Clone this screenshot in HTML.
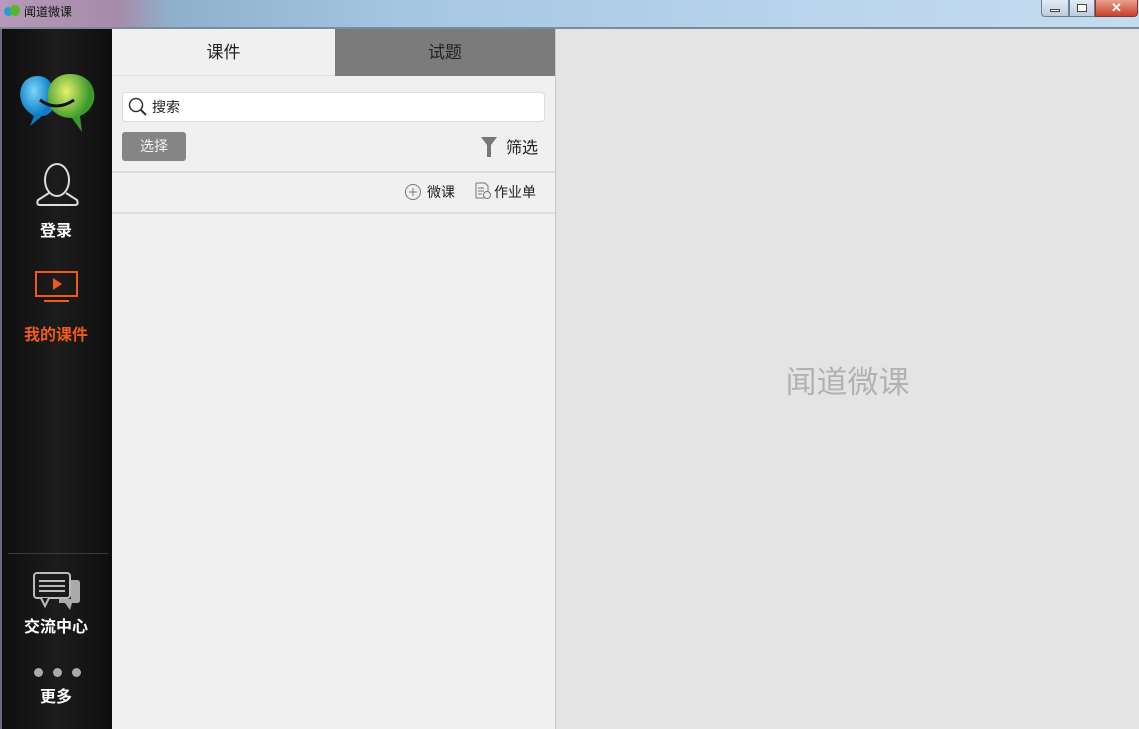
<!DOCTYPE html><html><head><meta charset="utf-8"><style>
*{margin:0;padding:0;box-sizing:border-box}
body{width:1139px;height:729px;overflow:hidden;position:relative;font-family:"Liberation Sans","Noto Sans CJK SC",sans-serif;background:#e4e4e4}
.a{position:absolute}
</style></head><body>
<div class="a" style="left:0;top:0;width:1139px;height:28px;background:linear-gradient(90deg,#b69ab8 0,#a58ca9 120px,#8fb0cc 170px,#a5c6e2 400px,#b9d4ec 800px,#c5dcef 1139px)"></div>
<div class="a" style="left:4px;top:7px;width:9px;height:9px;border-radius:50%;background:#2a9ad8"></div>
<div class="a" style="left:10px;top:5px;width:10px;height:11px;border-radius:50%;background:#5ab52e"></div>
<div class="a" style="left:24px;top:3px;font-size:12px;color:#111">闻道微课</div>
<div class="a" style="left:1041px;top:0;width:28px;height:17px;border:1px solid #6a7f95;border-top:none;border-radius:0 0 0 4px;background:linear-gradient(#e2ebf5,#bccbdc)"></div>
<div class="a" style="left:1050px;top:9px;width:10px;height:3px;background:#fff;border:1px solid #444"></div>
<div class="a" style="left:1069px;top:0;width:26px;height:17px;border:1px solid #6a7f95;border-top:none;background:linear-gradient(#e2ebf5,#bccbdc)"></div>
<div class="a" style="left:1077px;top:4px;width:10px;height:8px;border:1px solid #444;background:#fff"></div>
<div class="a" style="left:1095px;top:0;width:43px;height:17px;border:1px solid #7a3a30;border-top:none;border-radius:0 0 4px 0;background:linear-gradient(#e8a08e,#c8402a);color:#fff;font-size:13px;font-weight:bold;text-align:center;line-height:15px">✕</div>
<div class="a" style="left:0;top:27px;width:1139px;height:2px;background:#7d8a99"></div>
<!-- sidebar -->
<div class="a" style="left:0;top:29px;width:112px;height:700px;background:linear-gradient(90deg,#0e0e0e,#1c1c1c 50%,#0e0e0e);border-left:2px solid #6d6688"></div>
<svg class="a" style="left:18px;top:72px" width="78" height="62" viewBox="0 0 78 62">
<defs><radialGradient id="b" cx="40%" cy="30%"><stop offset="0" stop-color="#7fd4f5"/><stop offset="1" stop-color="#0a7ec8"/></radialGradient><radialGradient id="g" cx="40%" cy="30%"><stop offset="0" stop-color="#e8f070"/><stop offset="1" stop-color="#3a9a2a"/></radialGradient></defs>
<path d="M20 4 C6 4 0 16 3 28 C5 36 10 40 16 44 L12 54 L24 44 C32 44 38 36 36 24 C36 12 30 4 20 4Z" fill="url(#b)"/>
<path d="M52 2 C38 2 28 12 30 28 C32 40 42 46 54 46 L64 60 L62 44 C72 40 78 30 76 20 C74 8 64 2 52 2Z" fill="url(#g)"/>
<path d="M22 28 Q38 40 56 28" stroke="#111" stroke-width="3" fill="none"/></svg>
<svg class="a" style="left:35px;top:162px" width="45" height="46" viewBox="0 0 45 46"><ellipse cx="22" cy="18" rx="12" ry="16" fill="none" stroke="#ddd" stroke-width="2"/><path d="M14 31 L3 38 Q1 43 5 43 L40 43 Q44 43 42 38 L31 31" fill="none" stroke="#ddd" stroke-width="2"/></svg>
<div class="a" style="left:0;top:217px;width:112px;text-align:center;color:#fff;font-size:16px;font-weight:bold">登录</div>
<svg class="a" style="left:35px;top:271px" width="44" height="32"><rect x="1" y="1" width="41" height="24" fill="none" stroke="#f05a1a" stroke-width="2"/><path d="M18 7 L27 13 L18 19Z" fill="#f05a1a"/><rect x="9" y="29" width="25" height="2" fill="#f05a1a"/></svg>
<div class="a" style="left:0;top:321px;width:112px;text-align:center;color:#f05a1a;font-size:16px;font-weight:bold">我的课件</div>
<div class="a" style="left:8px;top:553px;width:100px;height:1px;background:#3a3a3a"></div>
<svg class="a" style="left:33px;top:572px" width="48" height="40"><rect x="1" y="1" width="36" height="25" rx="3" fill="#1a1a1a" stroke="#bbb" stroke-width="2"/><path d="M6 9h26M6 14h26M6 19h26" stroke="#bbb" stroke-width="2"/><path d="M38 8 h6 q3 0 3 3 v17 q0 3-3 3 h-5 l-2 7 -5-7 h-6 v-4 h12Z" fill="#aaa"/><path d="M8 26 l4 8 4-8" fill="#1a1a1a" stroke="#bbb" stroke-width="2"/></svg>
<div class="a" style="left:0;top:613px;width:112px;text-align:center;color:#fff;font-size:16px;font-weight:bold">交流中心</div>
<div class="a" style="left:34px;top:668px;width:9px;height:9px;border-radius:50%;background:#aaa"></div>
<div class="a" style="left:53px;top:668px;width:9px;height:9px;border-radius:50%;background:#aaa"></div>
<div class="a" style="left:72px;top:668px;width:9px;height:9px;border-radius:50%;background:#aaa"></div>
<div class="a" style="left:0;top:683px;width:112px;text-align:center;color:#fff;font-size:16px;font-weight:bold">更多</div>
<!-- middle -->
<div class="a" style="left:112px;top:29px;width:444px;height:700px;background:#f0f0f0;border-right:1px solid #c8c8c8"></div>
<div class="a" style="left:112px;top:29px;width:223px;height:47px;line-height:47px;text-align:center;font-size:17px;color:#222;border-bottom:1px solid #e0e0e0">课件</div>
<div class="a" style="left:335px;top:29px;width:220px;height:47px;line-height:47px;text-align:center;font-size:17px;color:#222;background:#7b7b7b">试题</div>
<div class="a" style="left:122px;top:92px;width:423px;height:30px;background:#fff;border:1px solid #ddd;border-radius:4px"></div>
<svg class="a" style="left:127px;top:96px" width="22" height="22"><circle cx="9" cy="9" r="6.5" fill="none" stroke="#333" stroke-width="1.5"/><path d="M13.5 13.5 L19 19" stroke="#333" stroke-width="2"/></svg>
<div class="a" style="left:152px;top:97px;font-size:14px;color:#222">搜索</div>
<div class="a" style="left:122px;top:132px;width:64px;height:29px;background:#858585;border-radius:3px;color:#f4f4f4;font-size:14px;text-align:center;line-height:29px">选择</div>
<svg class="a" style="left:480px;top:136px" width="18" height="22"><path d="M1 1 H17 L11 9 V21 H7 V9Z" fill="#777"/></svg>
<div class="a" style="left:506px;top:134px;font-size:16px;color:#222">筛选</div>
<div class="a" style="left:112px;top:171px;width:443px;height:2px;background:#dcdcdc"></div>
<svg class="a" style="left:404px;top:183px" width="18" height="18"><circle cx="9" cy="9" r="7.5" fill="none" stroke="#777"/><path d="M9 5v8M5 9h8" stroke="#777"/></svg>
<div class="a" style="left:427px;top:182px;font-size:14px;color:#222">微课</div>
<svg class="a" style="left:474px;top:182px" width="18" height="18"><path d="M2 1h9l3 3v6M2 1v15h8" fill="none" stroke="#777"/><path d="M4 6h6M4 9h6M4 12h4" stroke="#777"/><circle cx="13" cy="13" r="3.5" fill="none" stroke="#777"/></svg>
<div class="a" style="left:494px;top:182px;font-size:14px;color:#222">作业单</div>
<div class="a" style="left:112px;top:212px;width:443px;height:2px;background:#dcdcdc"></div>
<div class="a" style="left:556px;top:357px;width:583px;text-align:center;font-size:31px;color:#b2b2b2">闻道微课</div>
</body></html>
